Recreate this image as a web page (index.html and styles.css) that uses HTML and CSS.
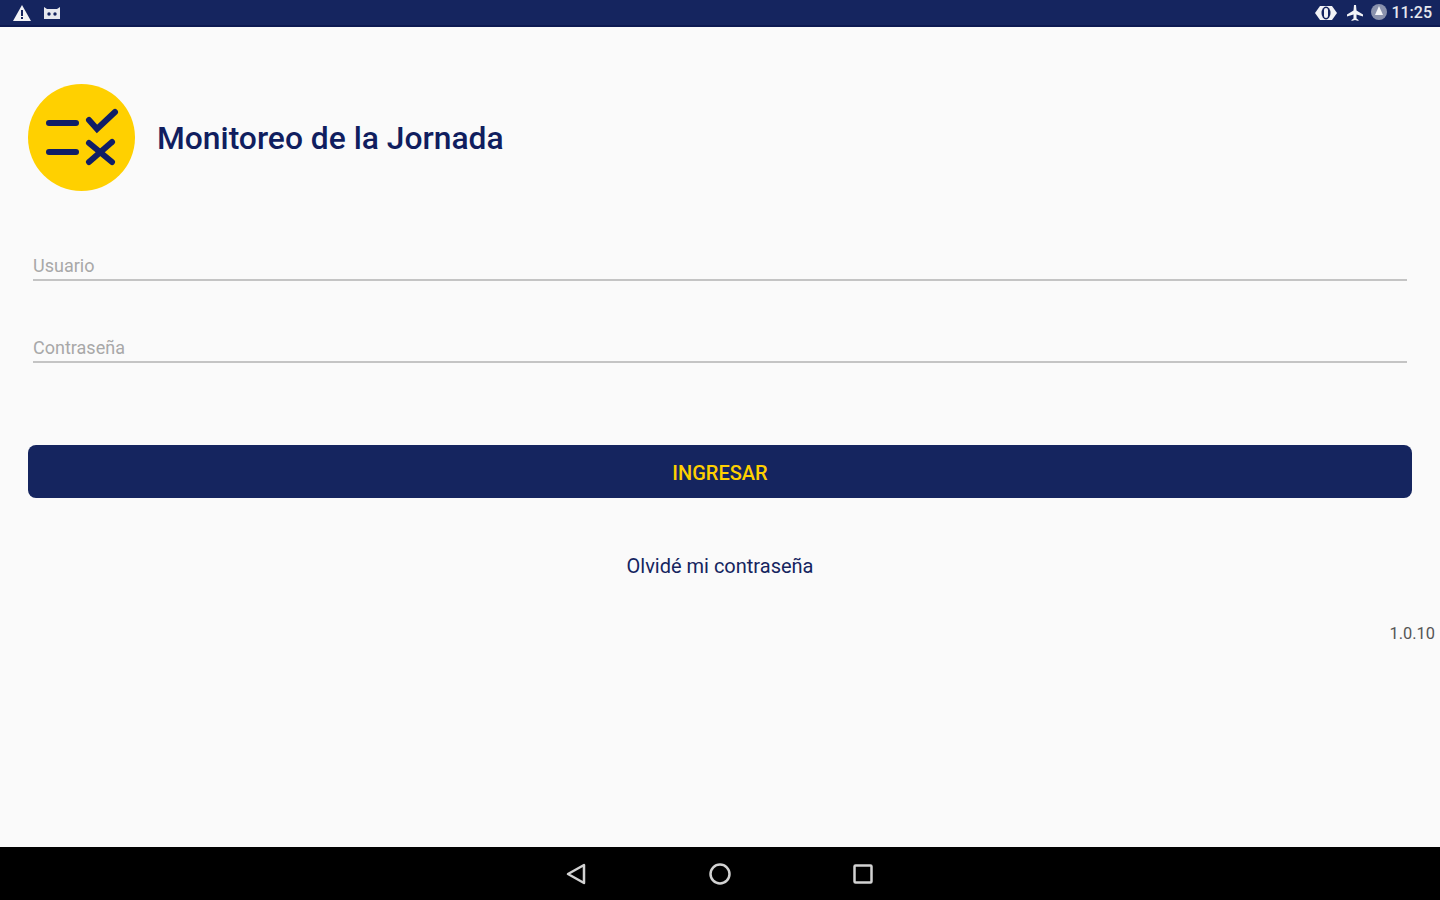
FILE: index.html
```html
<!DOCTYPE html>
<html lang="es">
<head>
    <meta charset="UTF-8">
    <meta name="viewport" content="width=device-width, initial-scale=1.0">
    <title>Monitoreo de la Jornada</title>
    <link rel="stylesheet" href="styles.css">
</head>
<body>
    <div class="status-bar">
        <div class="status-group">
            <svg width="20" height="18" viewBox="0 0 20 18"><path d="M10 1 L19 17 H1 Z" fill="#f2f3f6"/><rect x="9" y="6" width="2" height="6" fill="#15255f"/><rect x="9" y="13" width="2" height="2" fill="#15255f"/></svg>
            <svg width="20" height="14" viewBox="0 0 20 14"><path d="M2 1 L5 3 H15 L18 1 V13 H2 Z" fill="#e6e8ee"/><circle cx="7" cy="8" r="1.7" fill="#15255f"/><circle cx="13" cy="8" r="1.7" fill="#15255f"/></svg>
        </div>
        <div class="status-group status-right">
            <svg class="vibrate" width="24" height="18" viewBox="0 0 24 18"><path d="M1 9 L6 2 H18 L23 9 L18 16 H6 Z" fill="#f2f3f6"/><ellipse cx="12" cy="9" rx="4.500" ry="6.500" fill="#15255f"/><rect x="10" y="4" width="4" height="10" rx="2" fill="#f2f3f6"/></svg>
            <svg class="plane" width="18" height="18" viewBox="0 0 18 18"><path d="M8 1 H10 L10.500 6.500 L17 10.500 V12.500 L10.500 10.500 V14.500 L12.500 16 V17 L9 16 L5.500 17 V16 L7.500 14.500 V10.500 L1 12.500 V10.500 L7.500 6.500 Z" fill="#f2f3f6"/></svg>
            <svg width="18" height="18" viewBox="0 0 18 18"><circle cx="9" cy="8" r="8" fill="#8a92ad"/><path d="M9 2 L13 11 H5 Z" fill="#f2f3f6"/></svg>
            <span class="clock">11:25</span>
        </div>
    </div>

    <main class="content">
        <div class="brand">
            <svg class="logo" width="107" height="107" viewBox="0 0 107 107">
                <circle cx="53.500" cy="53.500" r="53.500" fill="#ffd000"/>
                <g fill="none" stroke="#101e66" stroke-width="6" stroke-linecap="round">
                    <path d="M21 39 H48"/>
                    <path d="M21 68 H48"/>
                    <path d="M61 36 L69 45 L87 28"/>
                    <path d="M61 59 L84 78"/>
                    <path d="M84 58 L61 78"/>
                </g>
            </svg>
            <h1 class="title">Monitoreo de la Jornada</h1>
        </div>

        <div class="field field-user">Usuario</div>
        <div class="field field-pass">Contraseña</div>

        <button class="login-btn">INGRESAR</button>
        <a class="forgot">Olvidé mi contraseña</a>
        <div class="version">1.0.10</div>
    </main>

    <div class="nav-bar">
        <svg class="nav-back" width="24" height="24" viewBox="0 0 24 24"><path d="M20 3 V21 L4 12 Z" fill="none" stroke="#d2d2d2" stroke-width="2.500" stroke-linejoin="round"/></svg>
        <svg width="24" height="24" viewBox="0 0 24 24"><circle cx="12" cy="12" r="9.500" fill="none" stroke="#d2d2d2" stroke-width="2.500"/></svg>
        <svg width="24" height="24" viewBox="0 0 24 24"><rect x="3.500" y="3.500" width="17" height="17" rx="1" fill="none" stroke="#d2d2d2" stroke-width="2.500"/></svg>
    </div>
</body>
</html>
```
FILE: styles.css
```css
* {
    box-sizing: border-box;
}
body {
    margin: 0;
    height: 900px;
    display: flex;
    flex-direction: column;
    overflow: hidden;
    background-color: #fafafa;
    font-family: Roboto, Arial, sans-serif;
}
.status-bar {
    height: 27px;
    flex-shrink: 0;
    display: flex;
    justify-content: space-between;
    align-items: center;
    padding: 0 8px 0 12px;
    background-color: #15255f;
    border-bottom: 2px solid #0d1a52;
}
.status-group {
    display: flex;
    align-items: center;
    gap: 10px;
}
.status-right {
    gap: 3px;
}
.vibrate {
    margin-right: 5px;
}
.plane {
    margin-right: 3px;
}
.clock {
    color: #e6e8ee;
    font-size: 16px;
    font-weight: 500;
}
.content {
    flex: 1;
    display: flex;
    flex-direction: column;
    padding: 57px 28px 0;
}
.brand {
    display: flex;
    align-items: center;
    gap: 22px;
}
.title {
    margin: 0;
    color: #101e5f;
    font-size: 31.800px;
    font-weight: 500;
}
.field {
    margin: 0 5px;
    height: 33px;
    padding-top: 7px;
    color: #a8a8a8;
    font-size: 18px;
    border-bottom: 2px solid #c4c4c4;
}
.field-user {
    margin-top: 57px;
}
.field-pass {
    margin-top: 49px;
}
.login-btn {
    height: 53px;
    margin-top: 82px;
    padding-top: 3px;
    border: none;
    border-radius: 8px;
    background-color: #15255f;
    color: #ffd000;
    font-family: inherit;
    font-size: 20px;
    font-weight: 500;
}
.forgot {
    margin-top: 56px;
    text-align: center;
    color: #15255f;
    font-size: 20px;
}
.version {
    margin: 46px -23px 0 0;
    text-align: right;
    color: #555;
    font-size: 16.400px;
}
.nav-bar {
    height: 53px;
    flex-shrink: 0;
    display: flex;
    justify-content: center;
    align-items: center;
    gap: 119px;
    background-color: #000;
}
.nav-back {
    margin-left: -1px;
    margin-right: 1px;
}
```
